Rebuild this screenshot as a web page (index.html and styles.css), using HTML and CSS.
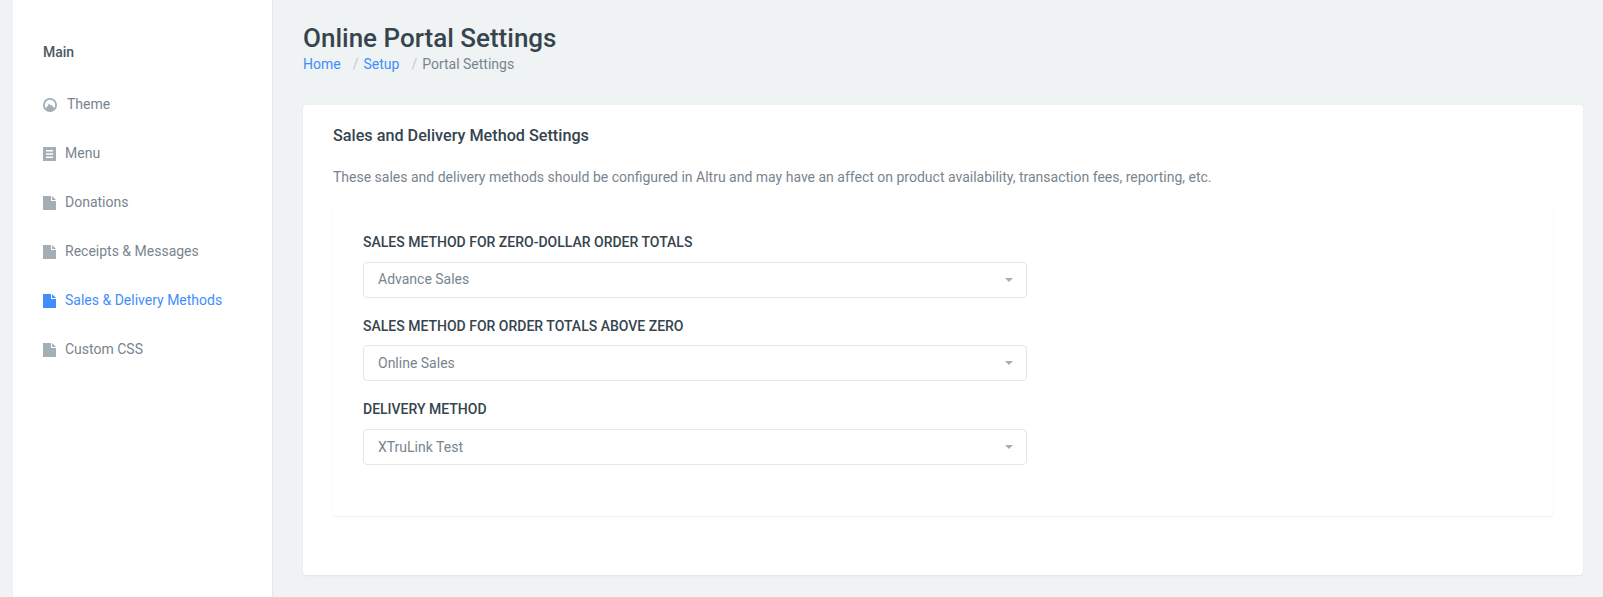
FILE: index.html
```html
<!DOCTYPE html>
<html lang="en">
<head>
<meta charset="utf-8">
<title>Online Portal Settings</title>
<link rel="stylesheet" href="styles.css">
</head>
<body>
<div class="app">
  <aside class="sidebar">
    <div class="side-title">Main</div>
    <nav class="side-nav">
      <a class="side-item side-item-theme"><svg class="ico" viewBox="0 0 14 14"><circle cx="7" cy="7" r="6.1" fill="none" stroke="currentColor" stroke-width="1.8"/><path d="M2.2 11L4.8 7.8 6.2 5.4 7.6 7.6 8.8 7 11.8 11a6 6 0 0 1-9.6 0z" fill="currentColor"/></svg><span>Theme</span></a>
      <a class="side-item"><svg class="ico" viewBox="0 0 13 14"><path fill-rule="evenodd" d="M0 0h13v14H0zM3 3v1.4h7V3zM3 6.3v1.4h7V6.3zM3 9.6V11h7V9.6z" fill="currentColor"/></svg><span>Menu</span></a>
      <a class="side-item"><svg class="ico" viewBox="0 0 13 14"><path d="M0 0h8v5h5v9H0zM9 0l4 4H9z" fill="currentColor"/></svg><span>Donations</span></a>
      <a class="side-item"><svg class="ico" viewBox="0 0 13 14"><path d="M0 0h8v5h5v9H0zM9 0l4 4H9z" fill="currentColor"/></svg><span>Receipts &amp; Messages</span></a>
      <a class="side-item active"><svg class="ico" viewBox="0 0 13 14"><path d="M0 0h8v5h5v9H0zM9 0l4 4H9z" fill="currentColor"/></svg><span>Sales &amp; Delivery Methods</span></a>
      <a class="side-item"><svg class="ico" viewBox="0 0 13 14"><path d="M0 0h8v5h5v9H0zM9 0l4 4H9z" fill="currentColor"/></svg><span>Custom CSS</span></a>
    </nav>
  </aside>
  <main class="main">
    <h1 class="page-title">Online Portal Settings</h1>
    <div class="crumbs"><a>Home</a><span class="sep">/</span><a>Setup</a><span class="sep">/</span><span>Portal Settings</span></div>
    <section class="card">
      <h2 class="card-title">Sales and Delivery Method Settings</h2>
      <p class="card-desc">These sales and delivery methods should be configured in Altru and may have an affect on product availability, transaction fees, reporting, etc.</p>
      <div class="panel">
        <div class="field">
          <label class="field-label">SALES METHOD FOR ZERO-DOLLAR ORDER TOTALS</label>
          <div class="select">Advance Sales<i class="caret"></i></div>
        </div>
        <div class="field">
          <label class="field-label">SALES METHOD FOR ORDER TOTALS ABOVE ZERO</label>
          <div class="select">Online Sales<i class="caret"></i></div>
        </div>
        <div class="field">
          <label class="field-label">DELIVERY METHOD</label>
          <div class="select">XTruLink Test<i class="caret"></i></div>
        </div>
      </div>
    </section>
  </main>
</div>
</body>
</html>
```
FILE: styles.css
```css
* { box-sizing: border-box; }
html, body { margin: 0; height: 100%; }
body {
  background: #eff3f4;
  font-family: Roboto, "Liberation Sans", sans-serif;
  font-size: 14px;
  line-height: 21px;
  color: #78858f;
  overflow: hidden;
}
.app { display: flex; height: 597px; padding-left: 13px; }
.sidebar {
  width: 260px;
  flex: none;
  background: #fff;
  border-right: 1px solid #e2e7ea;
  padding: 42px 0 0 30px;
}
.side-title { font-weight: 500; font-size: 14px; color: #4c5963; margin-bottom: 17px; }
.side-nav { display: flex; flex-direction: column; }
.side-item { display: flex; align-items: center; height: 49px; gap: 9px; color: #78858f; }
.side-item-theme .ico { width: 14px; }
.side-item-theme span { margin-left: 1px; }
.ico { width: 13px; height: 14px; flex: none; color: #a3aeb5; }
.side-item.active, .side-item.active .ico { color: #3f8efc; }
.main { flex: 1; min-width: 0; padding: 21px 20px 22px 30px; display: flex; flex-direction: column; }
.page-title { margin: 0; font-size: 26px; line-height: 34px; font-weight: 500; color: #36444e; }
.crumbs { display: flex; margin-top: -1px; color: #78858f; }
.crumbs a { color: #3f8efc; }
.sep { color: #c2cad0; margin: 0 5px 0 12px; }
.card {
  margin-top: 30px;
  flex: 1;
  background: #fff;
  border-radius: 4px;
  box-shadow: 0 1px 2px rgba(40, 60, 80, .08);
  padding: 19px 30px 0;
}
.card-title { margin: 0; font-size: 16.2px; line-height: 24px; font-weight: 500; color: #36444e; }
.card-desc { margin: 19px 0 0; }
.panel {
  margin-top: 21px;
  height: 307px;
  border-radius: 4px;
  box-shadow: 0 1px 2px rgba(40, 60, 80, .07), -1px 0 1px -1px rgba(40, 60, 80, .08), 1px 0 1px -1px rgba(40, 60, 80, .08);
  padding: 23px 30px 0;
}
.field { margin-bottom: 18px; width: 664px; }
.field-label { display: block; font-size: 14px; line-height: 21px; font-weight: 500; color: #36444e; margin-bottom: 9px; }
.field:nth-child(2) .field-label { margin-bottom: 8px; }
.select {
  position: relative;
  height: 36px;
  border: 1px solid #e2e7ea;
  border-radius: 4px;
  padding: 6px 14px;
  color: #78858f;
}
.field + .field .select { padding-top: 7px; }
.caret {
  position: absolute;
  right: 13px;
  top: 15px;
  border-left: 4px solid transparent;
  border-right: 4px solid transparent;
  border-top: 4px solid #a3aeb5;
}
```
